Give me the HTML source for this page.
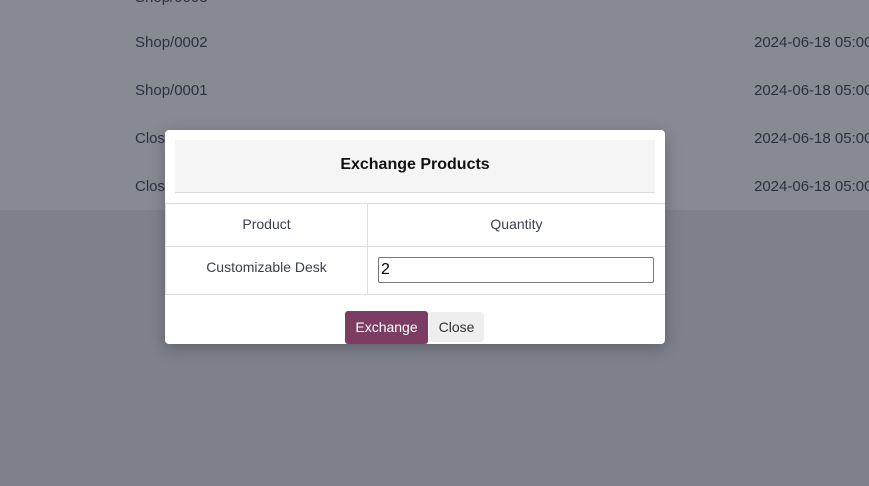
<!DOCTYPE html>
<html><head><style>
*{box-sizing:border-box;margin:0;padding:0}
body{width:869px;height:486px;overflow:hidden;position:relative;background:#7e818c;font-family:"Liberation Sans",sans-serif;}
.top{position:absolute;left:0;top:0;width:869px;height:210px;background:#878a93;}
.t{position:absolute;font-size:15px;color:#2b3042;white-space:nowrap}
.m{position:absolute;left:165px;top:130px;width:500px;height:214px;background:#fff;border-radius:4px;box-shadow:0 4px 16px rgba(0,0,0,.25);overflow:hidden}
.hd{position:absolute;left:10px;top:10px;width:480px;height:53px;background:#f5f5f5;border-bottom:1px solid #ddd;text-align:center;line-height:50px;font-weight:bold;font-size:16px;color:#111}
.c{position:absolute;border:1px solid #ddd;font-size:14px;color:#3a3f4e;text-align:center}
input{position:absolute;left:213px;top:127px;width:276px;height:26px;border:1px solid #777;border-radius:2px;font-size:16px;padding-left:2px;font-family:"Liberation Sans",sans-serif;color:#000}
.b{position:absolute;font-size:14px;text-align:center;border-radius:3px}
</style></head><body>
<div class="top"></div>
<div class="t" style="left:135px;top:-11px">Shop/0003</div>
<div class="t" style="left:135px;top:34px">Shop/0002</div>
<div class="t" style="left:135px;top:82px">Shop/0001</div>
<div class="t" style="left:135px;top:130px">Closing</div>
<div class="t" style="left:135px;top:178px">Closing</div>
<div class="t" style="left:754px;top:34px">2024-06-18 05:00</div>
<div class="t" style="left:754px;top:82px">2024-06-18 05:00</div>
<div class="t" style="left:754px;top:130px">2024-06-18 05:00</div>
<div class="t" style="left:754px;top:178px">2024-06-18 05:00</div>
<div class="m">
<div class="hd">Exchange Products</div>
<div class="c" style="left:0;top:73px;width:203px;height:44px;line-height:40px">Product</div>
<div class="c" style="left:202px;top:73px;width:299px;height:44px;line-height:40px">Quantity</div>
<div class="c" style="left:0;top:116px;width:203px;height:49px;line-height:40px">Customizable Desk</div>
<div class="c" style="left:202px;top:116px;width:299px;height:49px"></div>
<input value="2">
<div class="b" style="left:180px;top:181px;width:83px;height:33px;line-height:32px;background:#7c3d63;color:#fff">Exchange</div>
<div class="b" style="left:264px;top:182px;width:55px;height:30px;line-height:30px;background:#eeeeee;color:#333">Close</div>
</div>
</body></html>
